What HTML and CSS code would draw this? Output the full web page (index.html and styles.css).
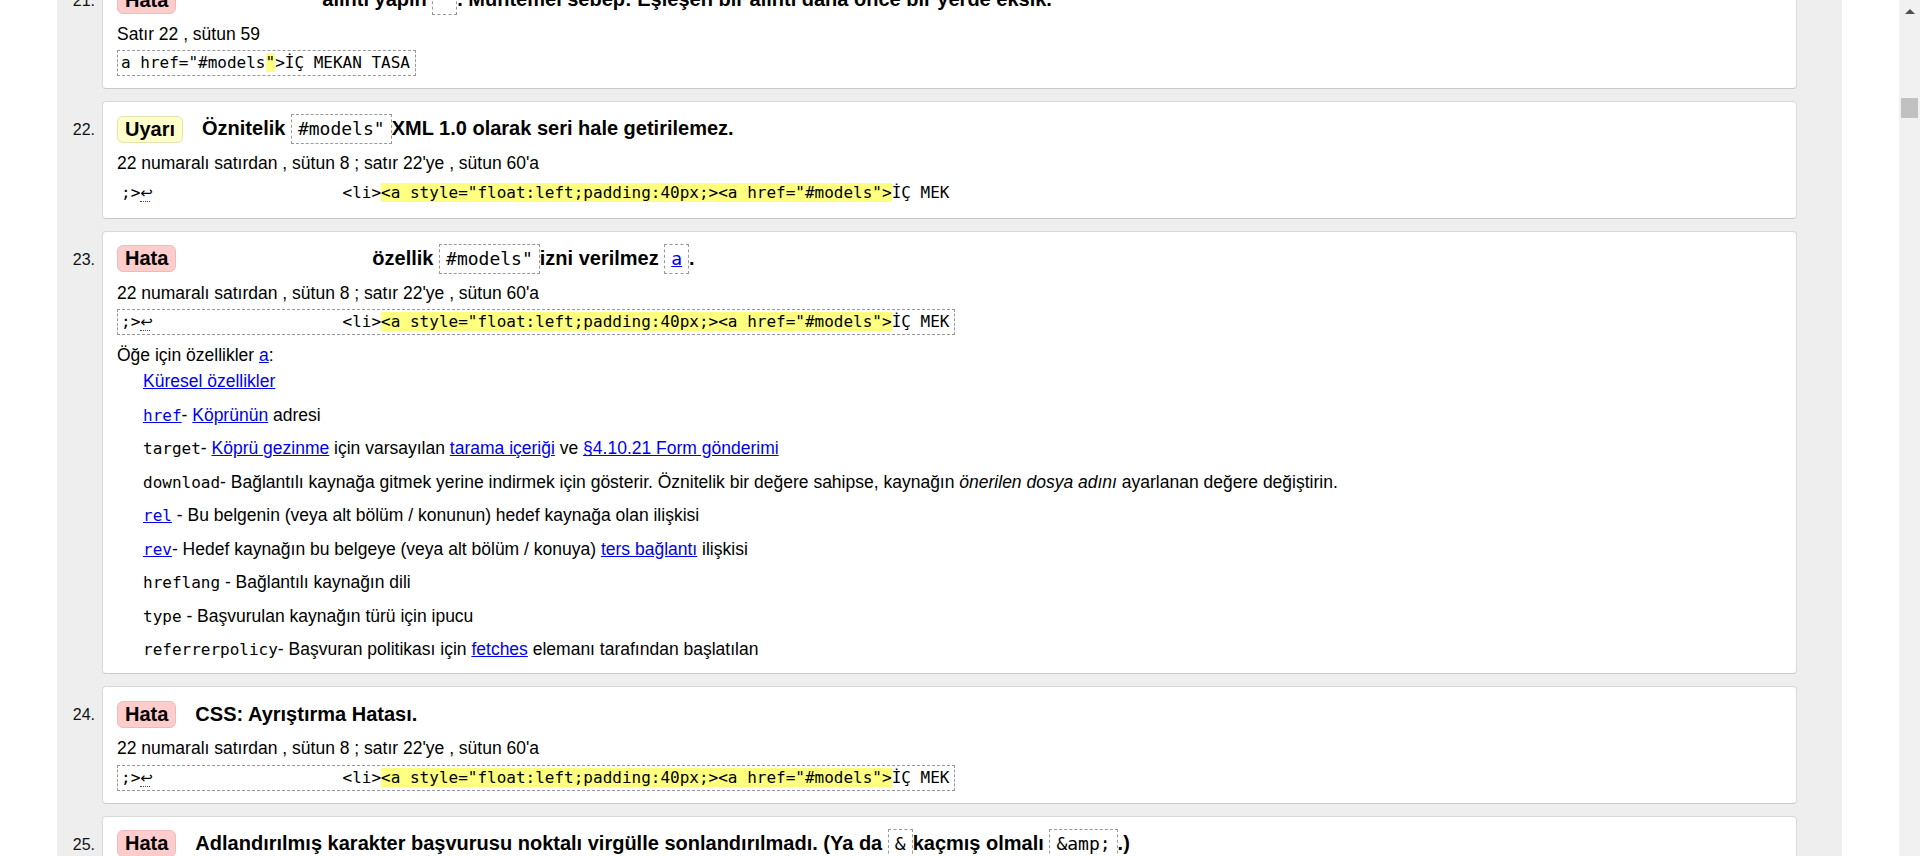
FILE: index.html
```html
<!DOCTYPE html>
<html lang="tr">
<head>
<meta charset="utf-8">
<title>Doğrulama sonuçları</title>
<link rel="stylesheet" href="styles.css">
</head>
<body>
<div class="page">
  <main class="results">
    <ol class="msgs">
      <li class="msg">
        <span class="num">21.</span>
        <div class="card">
          <div class="head"><span class="badge err">Hata</span><p class="title"><span class="gap gap-21"></span>alıntı yapın <code class="q">&nbsp;</code>. Muhtemel sebep: Eşleşen bir alıntı daha önce bir yerde eksik.</p></div>
          <p class="loc">Satır 22 , sütun 59</p>
          <div class="ext"><code class="src boxed">a href="#models<mark>"</mark>&gt;İÇ MEKAN TASA</code></div>
        </div>
      </li>
      <li class="msg">
        <span class="num">22.</span>
        <div class="card">
          <div class="head"><span class="badge warn">Uyarı</span><p class="title">Öznitelik <code class="q">#models"</code>XML 1.0 olarak seri hale getirilemez.</p></div>
          <p class="loc">22 numaralı satırdan , sütun 8 ; satır 22'ye , sütun 60'a</p>
          <div class="ext"><code class="src">;&gt;<abbr title="U+000A LINE FEED">↩</abbr>                    &lt;li&gt;<mark>&lt;a style="float:left;padding:40px;&gt;&lt;a href="#models"&gt;</mark>İÇ MEK</code></div>
        </div>
      </li>
      <li class="msg">
        <span class="num">23.</span>
        <div class="card">
          <div class="head"><span class="badge err">Hata</span><p class="title"><span class="gap gap-23"></span>özellik <code class="q">#models"</code>izni verilmez <code class="q"><a href="#a">a</a></code>.</p></div>
          <p class="loc">22 numaralı satırdan , sütun 8 ; satır 22'ye , sütun 60'a</p>
          <div class="ext"><code class="src boxed">;&gt;<abbr title="U+000A LINE FEED">↩</abbr>                    &lt;li&gt;<mark>&lt;a style="float:left;padding:40px;&gt;&lt;a href="#models"&gt;</mark>İÇ MEK</code></div>
          <div class="attrs">
            <p class="attrs-lead">Öğe için özellikler <a href="#a">a</a>:</p>
            <ul class="attr-list">
              <li><a href="#global">Küresel özellikler</a></li>
              <li><a href="#href"><code>href</code></a>- <a href="#hyperlink">Köprünün</a> adresi</li>
              <li><code>target</code>- <a href="#nav">Köprü gezinme</a> için varsayılan <a href="#context">tarama içeriği</a> ve <a href="#form">§4.10.21 Form gönderimi</a></li>
              <li><code>download</code>- Bağlantılı kaynağa gitmek yerine indirmek için gösterir. Öznitelik bir değere sahipse, kaynağın <em>önerilen dosya adını</em> ayarlanan değere değiştirin.</li>
              <li><a href="#rel"><code>rel</code></a> - Bu belgenin (veya alt bölüm / konunun) hedef kaynağa olan ilişkisi</li>
              <li><a href="#rev"><code>rev</code></a>- Hedef kaynağın bu belgeye (veya alt bölüm / konuya) <a href="#reverse">ters bağlantı</a> ilişkisi</li>
              <li><code>hreflang</code> - Bağlantılı kaynağın dili</li>
              <li><code>type</code> - Başvurulan kaynağın türü için ipucu</li>
              <li><code>referrerpolicy</code>- Başvuran politikası için <a href="#fetch">fetches</a> elemanı tarafından başlatılan</li>
            </ul>
          </div>
        </div>
      </li>
      <li class="msg">
        <span class="num">24.</span>
        <div class="card">
          <div class="head"><span class="badge err">Hata</span><p class="title">CSS: Ayrıştırma Hatası.</p></div>
          <p class="loc">22 numaralı satırdan , sütun 8 ; satır 22'ye , sütun 60'a</p>
          <div class="ext"><code class="src boxed">;&gt;<abbr title="U+000A LINE FEED">↩</abbr>                    &lt;li&gt;<mark>&lt;a style="float:left;padding:40px;&gt;&lt;a href="#models"&gt;</mark>İÇ MEK</code></div>
        </div>
      </li>
      <li class="msg">
        <span class="num">25.</span>
        <div class="card">
          <div class="head"><span class="badge err">Hata</span><p class="title">Adlandırılmış karakter başvurusu noktalı virgülle sonlandırılmadı. (Ya da <code class="q">&amp;</code>kaçmış olmalı <code class="q">&amp;amp;</code>.)</p></div>
          <p class="loc">22 numaralı satırdan , sütun 8 ; satır 22'ye , sütun 60'a</p>
        </div>
      </li>
    </ol>
  </main>
  <div class="scrollbar" aria-hidden="true">
    <span class="sb-arrow"></span>
    <span class="sb-thumb"></span>
  </div>
</div>
</body>
</html>
```

FILE: styles.css
```css
* { box-sizing: border-box; }

html, body {
  margin: 0;
  padding: 0;
  height: 856px;
  overflow: hidden;
  background: #fff;
}

body {
  font-family: "Liberation Sans", Arial, sans-serif;
  font-size: 17.5px;
  color: #000;
}

.page {
  display: flex;
  height: 856px;
  padding-left: 57px;
}

.results {
  flex: 0 0 1785px;
  margin-right: 57px;
  background: #eeeeee;
  padding-right: 45px;
  overflow: hidden;
}

.msgs {
  list-style: none;
  margin: -28px 0 0;
  padding: 0;
  display: grid;
  row-gap: 12px;
}

.msg {
  display: grid;
  grid-template-columns: 45px 1fr;
  align-items: start;
}

.num {
  text-align: right;
  padding-right: 7px;
  padding-top: 20px;
  line-height: 18px;
  font-size: 16px;
  color: #111;
}

.card {
  background: #fff;
  border: 1px solid #d9d9d9;
  border-bottom-color: #c9c9c9;
  border-radius: 4px;
  padding: 12px 14px;
}

.card p { margin: 0; }

.head {
  display: flex;
  align-items: center;
  min-height: 30px;
}

.badge {
  display: inline-block;
  font-weight: bold;
  font-size: 20px;
  line-height: 23px;
  padding: 1px 7px;
  border-radius: 6px;
  border: 1px solid;
}

.badge.err {
  background: #ffcccc;
  border-color: #ecbcbc;
}

.badge.warn {
  background: #ffffcc;
  border-color: #e6e2ae;
}

.title {
  margin-left: 19px !important;
  font-weight: bold;
  font-size: 20px;
}

.gap {
  display: inline-block;
  height: 1px;
}
.gap-21 { width: 127px; }
.gap-23 { width: 177px; }

.q {
  display: inline-block;
  font-family: "DejaVu Sans Mono", monospace;
  font-weight: normal;
  font-size: 18px;
  line-height: 22px;
  padding: 3px 6px;
  border: 1px dashed #999;
  white-space: pre;
}

a { color: #0000ee; text-decoration: underline; }

.loc {
  margin-top: 10px !important;
  line-height: 18.4px;
}

.ext {
  margin-top: 7px;
  height: 26px;
}

.src {
  display: inline-block;
  font-family: "DejaVu Sans Mono", monospace;
  font-size: 16px;
  line-height: 19px;
  padding: 2px 5px 3px 3px;
  border: 1px dashed transparent;
  white-space: pre;
}

.src.boxed { border-color: #999; }

.src mark {
  background: #ffff80;
  color: inherit;
}

.src abbr {
  display: inline-block;
  width: 9.63px;
  font-family: "DejaVu Sans", sans-serif;
  font-size: 15px;
  line-height: 15px;
  text-align: center;
  text-decoration: none;
  border-bottom: 1px dotted #444;
  vertical-align: baseline;
}

.attrs {
  margin-top: 11px;
  margin-bottom: 3px;
}

.attrs-lead { line-height: 18.4px; }

.attr-list {
  list-style: none;
  margin: 0;
  padding: 0 0 0 26px;
}

.attr-list li {
  height: 18.4px;
  line-height: 18.4px;
  margin-top: 15.1px;
  white-space: nowrap;
}

.attr-list li:first-child { margin-top: 7.6px; }

.attr-list code {
  font-family: "DejaVu Sans Mono", monospace;
  font-size: 16px;
  line-height: 0;
}

.scrollbar {
  flex: 0 0 21px;
  background: #f1f1f1;
  display: flex;
  flex-direction: column;
}

.sb-arrow {
  width: 0;
  height: 0;
  margin: 9px auto 0;
  border-left: 5px solid transparent;
  border-right: 5px solid transparent;
  border-bottom: 5px solid #505050;
}

.sb-thumb {
  width: 17px;
  height: 20px;
  margin: 84px 0 0 2px;
  background: #c1c1c1;
}
```
